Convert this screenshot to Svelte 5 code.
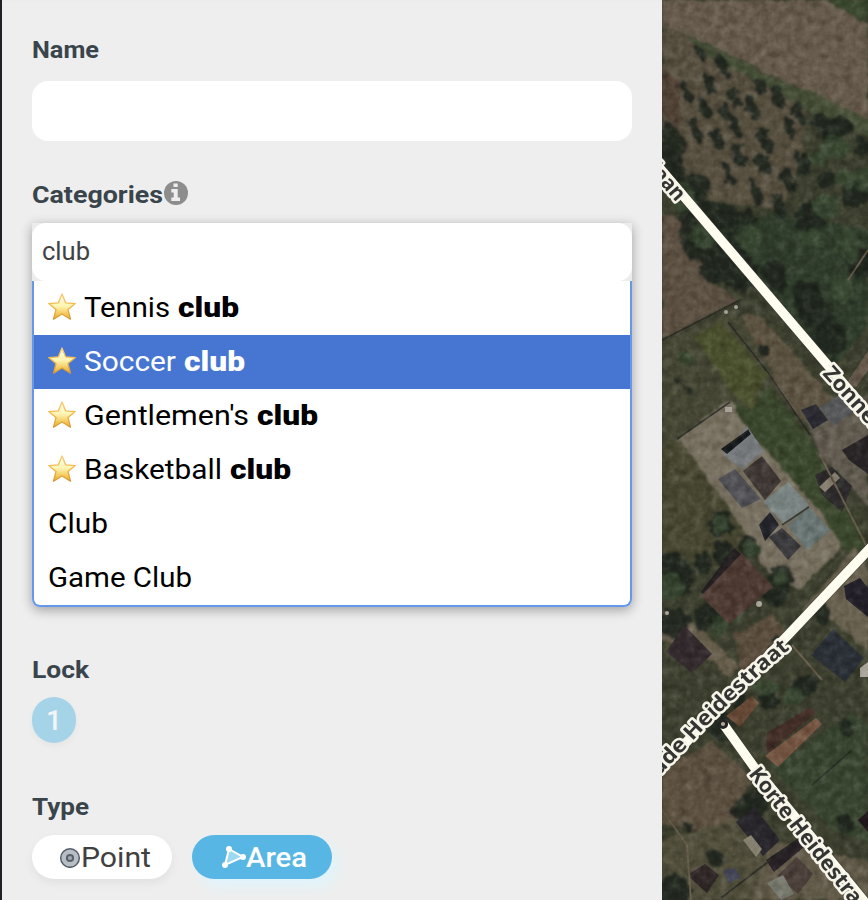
<script>
  const options = [
    { text: 'Tennis', bold: 'club', star: true, width: 86, boldWidth: 61 },
    { text: 'Soccer', bold: 'club', star: true, active: true, width: 92, boldWidth: 61 },
    { text: "Gentlemen's", bold: 'club', star: true, width: 165, boldWidth: 61 },
    { text: 'Basketball', bold: 'club', star: true, width: 138, boldWidth: 61 },
    { text: 'Club' },
    { text: 'Game Club' }
  ];

  const ground = [
    ['#655a4b', '0,0 165,0 206,25 206,118 145,92 100,70 45,44 0,25'],
    ['#3b4a30', '168,0 206,0 206,24 184,11'],
    ['#575040', '0,22 35,43 96,70 145,101 140,155 120,210 40,200 0,125'],
    ['#514336', '0,66 19,82 18,132 0,113'],
    ['#464e37', '25,35 45,43 104,74 147,91 206,119 206,138 149,111 99,84 38,53'],
    ['#5b5042', '0,215 25,220 40,260 56,287 76,300 0,341'],
    ['#303c2b', '49,225 112,213 206,230 206,325 174,365 150,349 105,300'],
    ['#454634', '0,344 70,309 85,325 130,390 84,424 46,445 0,475'],
    ['#4a502e', '33,337 58,321 104,374 91,410 71,394'],
    ['#5c5241', '77,313 101,318 176,405 167,444 129,408'],
    ['#3b472d', '68,400 90,410 106,385 148,439 205,548 188,555 92,449'],
    ['#777060', '15,439 68,399 86,431 157,509 179,547 137,590 105,571 70,520'],
    ['#474732', '0,449 18,440 70,511 94,550 55,570 0,550'],
    ['#615b50', '143,420 206,394 206,505 158,455'],
    ['#675e4c', '0,640 0,610 24,613 77,667 68,678 49,660'],
    ['#5a4d3d', '72,635 110,615 126,634 80,682'],
    ['#69614f', '141,610 194,547 206,568 206,651 170,620'],
    ['#394530', '109,768 191,713 206,724 206,842 170,830'],
    ['#5c5040', '0,770 49,742 88,775 74,838 0,824'],
    ['#504e3b', '0,840 75,820 206,900 0,900'],
    ['#625a49', '107,840 206,862 206,900 91,900']
  ];

  const buildings = [
    ['#777a7c', '61,455 85,426 102,451 80,469'],
    ['#515156', '56,479 73,469 99,499 80,508'],
    ['#3f3835', '81,471 100,456 119,481 103,500'],
    ['#798482', '101,502 126,482 147,505 122,524'],
    ['#687573', '126,526 146,506 168,530 145,550'],
    ['#3c3b3e', '107,537 120,528 139,546 126,560'],
    ['#25262c', '97,525 108,512 117,525 103,541'],
    ['#15191c', '59,449 86,430 89,434 65,454'],
    ['#241f20', '39,592 72,548 81,556 50,601'],
    ['#4d3a32', '39,596 80,553 111,587 67,624'],
    ['#342b2e', '4,652 22,625 50,654 30,673'],
    ['#24212a', '182,586 198,578 206,588 206,617 184,599'],
    ['#2b3037', '149,655 171,629 202,658 183,682'],
    ['#2c2a2a', '153,475 170,467 190,486 180,512 160,495'],
    ['#877f70', '157,487 173,472 178,478 163,492'],
    ['#282426', '180,450 206,435 206,474 187,460'],
    ['#2a2930', '139,410 154,404 166,420 151,429'],
    ['#585a5c', '157,408 176,396 194,410 172,426'],
    ['#664936', '64,716 90,696 97,703 78,727'],
    ['#432f27', '105,733 148,707 154,713 105,754'],
    ['#745542', '103,756 154,718 160,724 116,767'],
    ['#29272c', '74,822 92,807 118,840 101,856'],
    ['#85806f', '81,840 89,835 100,849 94,857'],
    ['#292327', '104,860 137,838 142,847 112,872'],
    ['#4b3f3a', '115,876 135,857 151,874 136,894'],
    ['#78796f', '105,883 121,875 132,894 119,900'],
    ['#21191b', '196,820 206,811 206,832'],
    ['#302827', '25,875 43,864 57,875 45,893'],
    ['#444656', '61,870 73,868 79,878 66,883'],
    ['#65584b', '184,384 206,351 206,370 194,387']
  ];

  const trees = [
    [39,54,5,10],[61,67,6,13],[25,93,5,12],[48,84,5,12],[72,97,5,10],[99,87,5,9],[116,98,5,13],
    [43,109,5,13],[64,114,5,11],[90,108,7,11],[137,114,5,14],[33,130,5,13],[55,139,5,12],[74,128,5,13],
    [103,141,6,14],[127,127,5,12],[67,174,5,14],[94,193,5,14],[117,205,6,14],[101,164,7,12],[126,181,6,14],
    [140,163,6,15],[77,155,6,13],[174,130,17,12],[157,121,9,7],[12,140,10,19],[6,165,15,26],[35,187,13,14],
    [37,218,21,18],[60,218,17,12],[82,221,12,11],[149,216,17,15],[164,181,10,9],[193,194,15,13],[201,148,9,11],
    [35,240,16,22],[67,247,19,17],[79,274,18,19],[56,267,19,15],[112,276,12,17],[150,306,16,28],[167,337,18,20],
    [197,261,12,18],[59,524,13,12],[86,546,10,11],[120,577,12,12],[41,563,9,10],[64,555,12,15],[11,575,20,23],
    [48,615,16,13],[113,595,13,11],[12,622,16,14],[142,687,15,10],[99,795,11,8],[61,727,14,14],[88,808,18,14],
    [11,892,18,16],[53,859,8,9],[25,826,5,7],[184,729,7,10],[119,645,13,8],[160,614,8,12],[102,351,5,5],
    [15,381,3,4],[28,391,3,3],[184,823,8,11],[78,704,8,8],[107,700,10,10]
  ];

  const crowns = [
    [174,147,14,12],[186,178,12,10],[164,207,14,13],[21,197,12,15],[42,235,13,14],[87,239,13,14],
    [151,238,12,10],[186,246,13,15],[180,289,11,13],[58,524,8,9],[90,548,8,8],[118,578,7,8],[8,586,14,14],
    [57,627,8,12],[104,688,14,8],[131,696,10,9],[24,359,8,7],[74,612,8,7],[155,158,10,9],[201,180,9,12]
  ];
</script>

<main>
  <section class="panel">
    <div class="field name">
      <h2><svg class="label" width="68" height="30"><text x="0" y="23" textLength="67" lengthAdjust="spacingAndGlyphs">Name</text></svg></h2>
      <div class="input"></div>
    </div>
    <div class="field categories">
      <h2>
        <svg class="label" width="132" height="32"><text x="0" y="23" textLength="131" lengthAdjust="spacingAndGlyphs">Categories</text></svg>
        <svg class="info" width="24" height="24" viewBox="0 0 24 24">
          <circle cx="12" cy="12" r="12" fill="#8d8d8d"/>
          <path d="M9.5 2.5h4.2V6H9.5zM7.3 8h6.4v8.5H16V20H7.3v-3.5h2.4v-5H7.3z" fill="#eee"/>
        </svg>
      </h2>
      <div class="combo">
        <div class="searchbox"><div class="input search"><svg width="60" height="38"><text x="0" y="28" textLength="48" lengthAdjust="spacingAndGlyphs">club</text></svg></div></div>
        <div class="menu">
          {#each options as item, i}
            <div class="option" class:active={item.active}>
              {#if item.star}
                <svg class="star" width="28" height="28" viewBox="0 0 28 28">
                  <defs>
                    <linearGradient id={'gold' + i} x2="0" y2="1"><stop stop-color="#fffef0"/><stop offset=".48" stop-color="#fff4b2"/><stop offset="1" stop-color="#edaa1d"/></linearGradient>
                    <linearGradient id={'rim' + i} x2="0" y2="1"><stop stop-color="#f7ca73"/><stop offset=".5" stop-color="#f1b746"/><stop offset="1" stop-color="#d79738"/></linearGradient>
                  </defs>
                  <path d="M14 1 17.6 9.8 27.3 10.6 20 16.6 22.5 26.2 14 21 5.5 26.2 8 16.6.7 10.6 10.4 9.8Z" fill={'url(#gold' + i + ')'} stroke={'url(#rim' + i + ')'} stroke-width="1.3" stroke-linejoin="round"/>
                </svg>
                <svg class="choice" width="260" height="38"><text x="0" y="28" textLength={item.width} lengthAdjust="spacingAndGlyphs">{item.text}</text><text x={item.width + 8} y="28" textLength={item.boldWidth} lengthAdjust="spacingAndGlyphs" class="strong">{item.bold}</text></svg>
              {:else}
                <svg class="choice" width="200" height="38"><text x="0" y="28" textLength={item.text === 'Club' ? 60 : 144} lengthAdjust="spacingAndGlyphs">{item.text}</text></svg>
              {/if}
            </div>
          {/each}
        </div>
      </div>
    </div>
    <div class="field lock">
      <h2><svg class="label" width="60" height="30"><text x="0" y="24" textLength="57" lengthAdjust="spacingAndGlyphs">Lock</text></svg></h2>
      <div class="badge">1</div>
    </div>
    <div class="field type">
      <h2><svg class="label" width="60" height="32"><text x="0" y="23" textLength="57" lengthAdjust="spacingAndGlyphs">Type</text></svg></h2>
      <div class="choices">
        <button><svg width="22" height="22" viewBox="0 0 22 22"><circle cx="11" cy="12" r="9.3" fill="#b9bec5" stroke="#555f6c" stroke-width="1.5"/><circle cx="11" cy="12" r="3.1" fill="#a4a7ac" stroke="#59616c" stroke-width="2"/></svg><svg class="button-text" width="72" height="38"><text x="0" y="28.5" textLength="70" lengthAdjust="spacingAndGlyphs">Point</text></svg></button>
        <button class="selected"><svg width="24" height="24" viewBox="0 0 24 24"><path d="M7 4 21 12 3 20Z" fill="#9bd9f3" stroke="white" stroke-width="2"/><g fill="white"><circle cx="7" cy="4" r="3"/><circle cx="21" cy="12" r="3"/><circle cx="3" cy="20" r="3"/></g></svg><svg class="button-text" width="63" height="38"><text x="0" y="28.5" textLength="61" lengthAdjust="spacingAndGlyphs">Area</text></svg></button>
      </div>
    </div>
  </section>

  <svg class="map" width="206" height="900" viewBox="0 0 206 900">
    <defs>
      <filter id="terrain" x="-5%" y="-2%" width="110%" height="104%" color-interpolation-filters="sRGB"><feTurbulence type="fractalNoise" baseFrequency=".09" numOctaves="3" seed="8" result="n"/><feDisplacementMap in="SourceGraphic" in2="n" scale="7" xChannelSelector="R" yChannelSelector="G"/><feGaussianBlur stdDeviation="1.3"/></filter>
      <filter id="foliage" x="-10%" y="-2%" width="120%" height="104%" color-interpolation-filters="sRGB"><feTurbulence type="fractalNoise" baseFrequency=".12" numOctaves="3" seed="21" result="n"/><feDisplacementMap in="SourceGraphic" in2="n" scale="12" xChannelSelector="R" yChannelSelector="G"/><feGaussianBlur stdDeviation="1.3"/></filter>
      <filter id="roof" color-interpolation-filters="sRGB"><feGaussianBlur stdDeviation=".7"/></filter>
      <filter id="grain" color-interpolation-filters="sRGB"><feTurbulence type="fractalNoise" baseFrequency=".12" numOctaves="4" seed="14"/><feColorMatrix values=".7 .5 .3 0 -.25 .7 .5 .3 0 -.25 .7 .5 .3 0 -.25 0 0 0 0 .42"/></filter>
      <path id="oude-heidestraat" d="M-23 794Q-7 782 0 773L42 729Q84 686 111 663T150 632"/>
    </defs>
    <rect width="206" height="900" fill="#3d402f"/>
    <g filter="url(#terrain)">{#each ground as [fill, points]}<polygon {fill} {points}/>{/each}</g>
    <g filter="url(#foliage)" fill="#20261f" opacity=".9">{#each trees as [x, y, rx, ry]}<ellipse cx={x} cy={y} {rx} {ry} transform={`rotate(-25 ${x} ${y})`}/>{/each}</g>
    <g filter="url(#foliage)" fill="#3b4b34" opacity=".75">{#each crowns as [x, y, rx, ry]}<ellipse cx={x} cy={y} {rx} {ry}/>{/each}</g>
    <g filter="url(#roof)">
      {#each buildings as [fill, points]}<polygon {fill} {points}/>{/each}
      <g fill="none" stroke="#655c4b" stroke-width="2"><path d="M186 280 206 250"/><path d="M107 374 136 415"/><path d="M158 455 204 545"/><path d="M0 810 25 845 29 900"/><path d="M130 645 160 680"/></g>
      <g fill="none" stroke="#252722" stroke-width="1.6" opacity=".75"><path d="M0 340 80 299"/><path d="M66 322 107 374 148 435"/><path d="M15 439 68 402"/><path d="M63 448 87 430"/><path d="M120 525 147 507"/><path d="M59 898 136 839"/><path d="M150 785 190 750"/></g>
      <g fill="#a9a49a"><circle cx="64" cy="312" r="2"/><circle cx="74" cy="307" r="2"/><rect x="63" y="407" width="7" height="5"/><circle cx="97" cy="604" r="3"/><circle cx="5" cy="613" r="2"/><path d="M198 668 206 662V677H198Z"/></g>
    </g>
    <rect class="texture" width="206" height="900" filter="url(#grain)"/>
    <g fill="none" stroke-linecap="butt">
      <g stroke="#403f38" stroke-opacity=".6" stroke-width="11"><path d="M-5 165 24 199 163 362 211 418"/><path d="M-5 774 42 723 128 633 211 545"/><path d="M61 723 92 767 211 912"/></g>
      <g stroke="#fffdf0" stroke-width="9.4"><path d="M-5 165 24 199 163 362 211 418"/><path d="M-5 774 42 723 128 633 211 545"/><path d="M62 725 92 767 211 912"/></g>
    </g>
    <g class="street">
      <text transform="translate(-14 170) rotate(49)" textLength="43" lengthAdjust="spacingAndGlyphs">laan</text>
      <text transform="translate(160 374) rotate(48)" textLength="116" lengthAdjust="spacingAndGlyphs">Zonnelaan</text>
      <text><textPath href="#oude-heidestraat" startOffset="8" textLength="202" lengthAdjust="spacingAndGlyphs">Oude Heidestraat</textPath></text>
      <text transform="translate(86 774) rotate(51.5)" textLength="190" lengthAdjust="spacingAndGlyphs">Korte Heidestraat</text>
    </g>
    <circle cx="61" cy="724" r="3.6" fill="#b0aa9c" stroke="#242424" stroke-width="3"/>
  </svg>
</main>

<style>
  :global(body) { margin: 0; }
  * { box-sizing: border-box; }
  main { width: 868px; height: 900px; display: grid; grid-template-columns: 662px 206px; overflow: hidden; background: #eee; font-family: Roboto, sans-serif; }
  .panel { height: 900px; padding: 34px 30px 0; border-left: 2px solid #202124; background: linear-gradient(#ebebeb, #eee 3px); }
  h2 { margin: 0; height: 32px; display: flex; align-items: flex-start; }
  .label { display: block; flex: none; overflow: visible; fill: #39444b; font-size: 24px; font-weight: 700; }
  .input { width: 600px; height: 60px; border-radius: 16px; background: white; }
  .name { height: 144px; }
  .name h2 { height: 47px; padding-top: 1px; }
  .categories { height: 476px; }
  .categories h2 { height: 45px; padding-top: 2px; }
  .info { margin: 1px 0 0; }
  .combo { box-shadow: 0 3px 12px #0005; height: 384px; border-radius: 0 0 8px 8px; }
  .searchbox { height: 58px; background: #ececec; }
  .search { height: 58px; padding: 9px 10px; border-radius: 14px; font-size: 26px; color: #424242; }
  .search text { fill: #424242; }
  .menu { height: 326px; border: 2px solid #6598ed; border-top: 0; border-radius: 0 0 8px 8px; background: white; overflow: hidden; }
  .option { height: 54px; padding: 0 14px; display: flex; align-items: center; font-size: 28px; color: #000; }
  .active { background: #4676d2; color: white; }
  .star { margin: 0 8px 3px 0; flex: none; }
  .choice { overflow: visible; fill: currentColor; }
  .strong { font-weight: 900; }
  .lock { height: 137px; }
  .lock h2 { height: 43px; }
  .badge { width: 44px; height: 46px; border-radius: 22px; display: grid; place-items: center; background: #a5d4e9; color: #f3f5f6; font-size: 28px; font-weight: 500; box-shadow: 0 3px 7px #0000000a; }
  .type h2 { height: 44px; padding-top: 1px; }
  .choices { display: flex; gap: 20px; }
  button { width: 140px; height: 44px; display: flex; align-items: center; justify-content: flex-start; padding: 0 0 0 27px; border: 0; border-radius: 22px; background: white; color: #404040; font: 28px Roboto, sans-serif; box-shadow: 0 4px 10px #0000000f; }
  button.selected { padding-left: 30px; background: #58b6e4; color: white; box-shadow: 6px 8px 12px #e0f4fb; }
  .button-text { flex: none; fill: currentColor; font-weight: 400; overflow: visible; }
  .selected .button-text { font-weight: 500; }
  .map { display: block; overflow: hidden; }
  .texture { mix-blend-mode: soft-light; }
  .street { font: 700 21px "Noto Sans", sans-serif; fill: #343432; stroke: #f7f4e9; stroke-width: 5px; stroke-linejoin: round; paint-order: stroke fill; }
</style>
